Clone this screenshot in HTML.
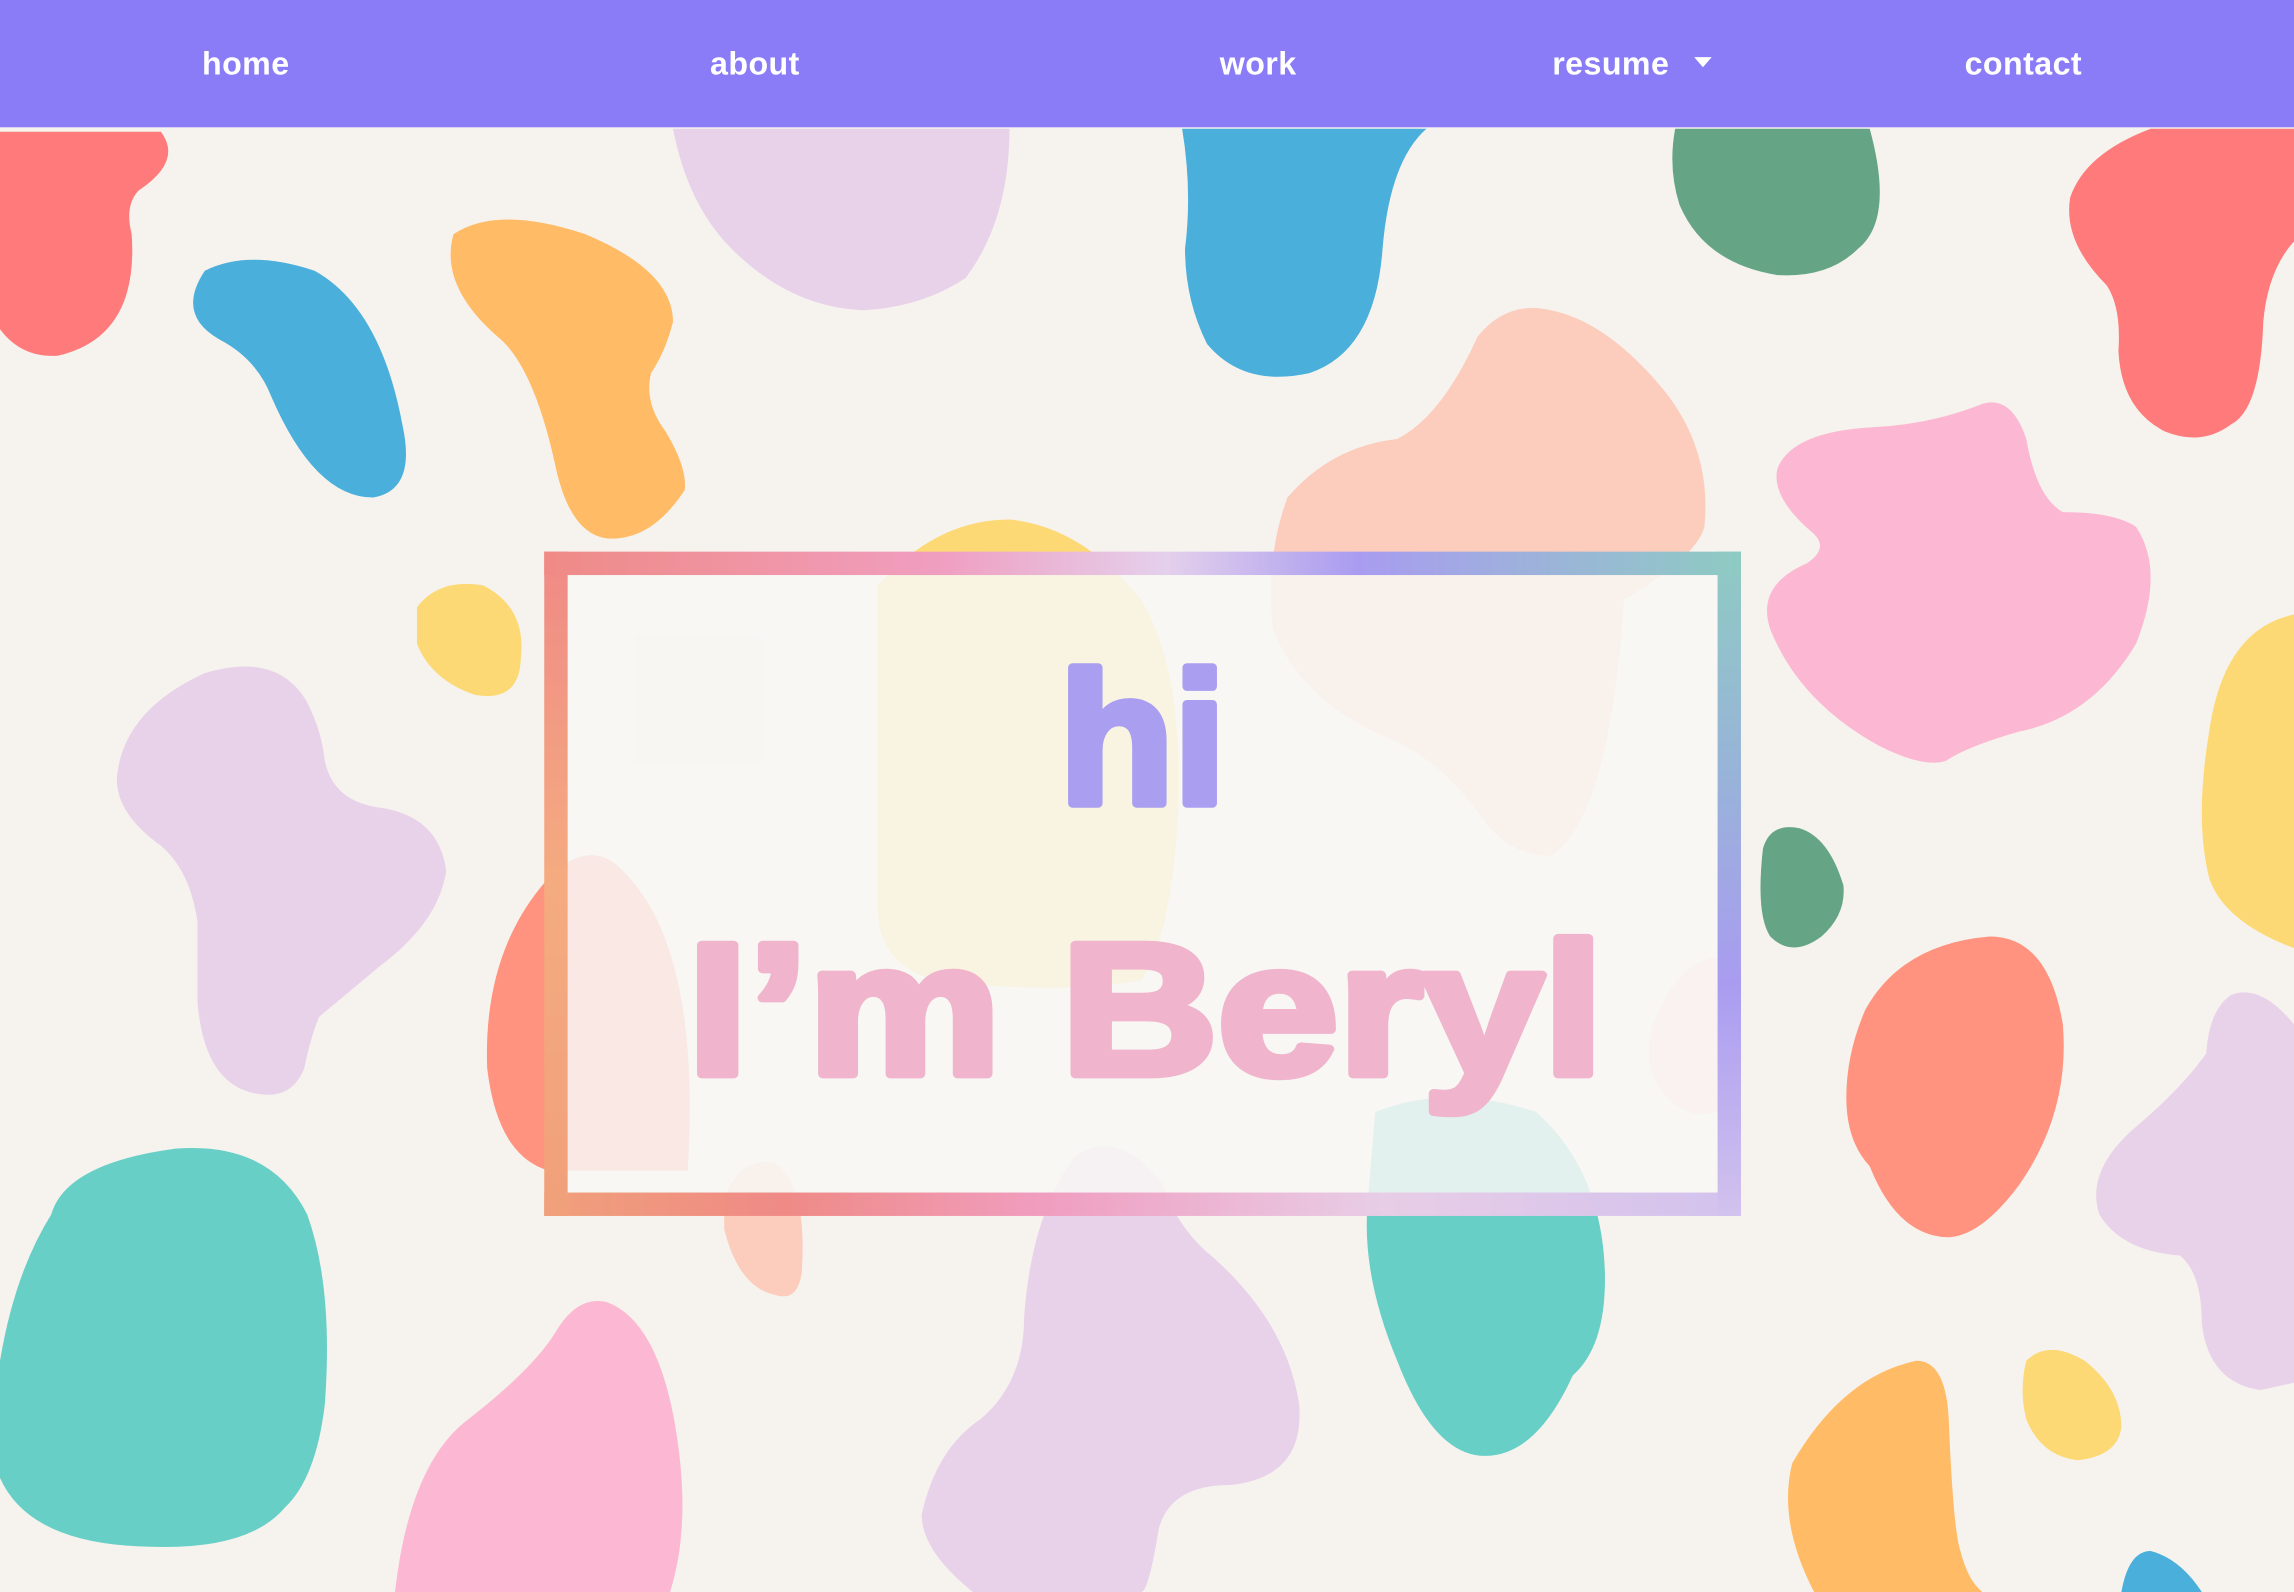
<!DOCTYPE html>
<html><head><meta charset="utf-8"><style>
html,body{margin:0;padding:0;width:2294px;height:1592px;overflow:hidden;background:#f6f3ee;}
svg{display:block}
</style></head><body>
<svg width="2294" height="1592" viewBox="0 0 1568 1088" preserveAspectRatio="none" xmlns="http://www.w3.org/2000/svg">
<defs>
<linearGradient id="gt" x1="0" y1="0" x2="1" y2="0">
<stop offset="0" stop-color="#ef8a86"/>
<stop offset="0.33" stop-color="#f09ec0"/>
<stop offset="0.52" stop-color="#e4d0ec"/>
<stop offset="0.68" stop-color="#a99cf0"/>
<stop offset="1" stop-color="#8ecbc2"/>
</linearGradient>
<linearGradient id="gb" x1="0" y1="0" x2="1" y2="0">
<stop offset="0" stop-color="#f0a07a"/>
<stop offset="0.2" stop-color="#ef8a86"/>
<stop offset="0.42" stop-color="#f09ec0"/>
<stop offset="0.7" stop-color="#e8cde6"/>
<stop offset="1" stop-color="#d2c2ee"/>
</linearGradient>
<linearGradient id="gl" x1="0" y1="0" x2="0" y2="1">
<stop offset="0" stop-color="#ef8a86"/>
<stop offset="0.5" stop-color="#f5ab80"/>
<stop offset="1" stop-color="#f0a07a"/>
</linearGradient>
<linearGradient id="gr" x1="0" y1="0" x2="0" y2="1">
<stop offset="0" stop-color="#8ecbc2"/>
<stop offset="0.35" stop-color="#99b2da"/>
<stop offset="0.65" stop-color="#a99cf0"/>
<stop offset="1" stop-color="#d2c2ee"/>
</linearGradient>
</defs>
<rect width="1568" height="1088" fill="#f6f3ee"/>
<g>
<path fill="#ff7b7b" d="M0,90 L110,90 Q125,110 95,130 Q85,140 90,160 Q95,230 40,243 Q15,245 0,225 Z"/>
<path fill="#4aafdb" d="M140,185 Q170,170 215,185 Q260,210 275,290 Q285,335 255,340 Q215,340 185,270 Q175,245 150,232 Q120,215 140,185 Z"/>
<path fill="#ffbb66" d="M310,160 Q340,140 400,160 Q460,185 460,220 Q455,240 445,255 Q440,275 455,295 Q470,320 468,335 Q445,370 415,368 Q390,365 380,320 Q365,250 340,230 Q300,195 310,160 Z"/>
<path fill="#e8d2ea" d="M460,88 L690,88 Q690,150 660,190 Q630,210 590,212 Q540,210 500,170 Q470,140 460,88 Z"/>
<path fill="#4aafdb" d="M808,88 L975,88 Q950,110 945,170 Q940,240 895,255 Q850,265 825,235 Q810,205 810,170 Q815,130 808,88 Z"/>
<path fill="#65a586" d="M1145,88 L1278,88 Q1295,150 1270,170 Q1250,190 1215,188 Q1165,180 1148,140 Q1140,115 1145,88 Z"/>
<path fill="#ff7b7b" d="M1470,88 L1568,88 L1568,165 Q1550,185 1547,220 Q1545,280 1525,290 Q1505,305 1480,295 Q1450,280 1448,240 Q1450,210 1440,195 Q1410,165 1415,135 Q1425,105 1470,88 Z"/>
<path fill="#fcccbd" d="M880,340 Q910,305 955,300 Q985,285 1010,230 Q1030,205 1060,212 Q1100,220 1140,270 Q1170,310 1165,360 Q1160,380 1110,410 Q1100,560 1060,585 Q1030,585 1010,555 Q985,520 950,505 Q890,480 870,430 Q865,380 880,340 Z"/>
<path fill="#fcb8d2" d="M1215,320 Q1225,295 1280,292 Q1320,290 1355,276 Q1375,270 1385,300 Q1392,340 1410,350 Q1445,350 1460,360 Q1480,390 1460,440 Q1430,490 1380,500 Q1345,510 1330,520 Q1315,525 1285,510 Q1230,480 1210,430 Q1200,400 1235,385 Q1250,375 1240,365 Q1210,340 1215,320 Z"/>
<path fill="#fcd975" d="M1568,420 Q1520,430 1510,500 Q1500,560 1510,600 Q1520,630 1568,648 Z"/>
<path fill="#fcd975" d="M285,415 Q300,395 330,400 Q360,415 356,450 Q355,480 325,475 Q295,465 285,440 Z"/>
<path fill="#e8d2ea" d="M80,530 Q85,485 140,460 Q190,445 210,480 Q220,500 222,520 Q228,548 260,552 Q300,558 305,595 Q300,630 260,660 Q230,685 218,695 Q212,710 208,730 Q200,750 180,748 Q140,745 135,685 Q135,655 135,630 Q130,595 110,578 Q78,555 80,530 Z"/>
<path fill="#fcd975" d="M600,400 Q640,355 690,355 Q740,360 780,410 Q810,460 805,560 Q800,640 780,670 Q720,680 640,670 Q600,660 600,620 Z"/>
<path fill="#ff937f" d="M375,600 Q330,650 333,730 Q340,790 375,800 L470,800 Q480,640 420,590 Q400,575 375,600 Z"/>
<path fill="#65a586" d="M1205,580 Q1210,562 1230,566 Q1250,572 1260,605 Q1262,625 1245,640 Q1225,655 1210,640 Q1200,625 1205,580 Z"/>
<path fill="#fcd6dc" d="M1130,700 Q1150,650 1180,655 L1190,750 Q1165,770 1145,755 Q1120,735 1130,700 Z"/>
<path fill="#ff937f" d="M1275,690 Q1300,645 1360,640 Q1400,640 1410,700 Q1415,760 1380,810 Q1350,850 1325,845 Q1295,840 1278,797 Q1262,780 1262,750 Q1262,720 1275,690 Z"/>
<path fill="#e8d2ea" d="M1568,700 Q1545,672 1525,680 Q1510,690 1508,720 Q1490,745 1460,770 Q1425,800 1435,830 Q1450,855 1490,858 Q1505,870 1505,905 Q1510,945 1545,950 L1568,945 Z"/>
<path fill="#68cfc7" d="M35,830 Q45,795 120,785 Q185,780 210,830 Q228,880 222,960 Q216,1010 195,1030 Q170,1060 100,1057 Q20,1055 0,1010 L0,930 Q10,870 35,830 Z"/>
<path fill="#fcccbd" d="M495,820 Q505,790 530,795 Q552,810 548,870 Q545,890 530,885 Q505,880 495,840 Z"/>
<path fill="#fcb8d2" d="M270,1088 Q280,1000 320,970 Q365,935 380,910 Q395,885 415,890 Q455,905 465,1000 Q470,1050 458,1088 Z"/>
<path fill="#e8d2ea" d="M630,1035 Q640,990 670,970 Q700,945 700,900 Q705,830 735,790 Q765,770 795,810 Q805,840 830,860 Q880,905 888,960 Q892,1010 840,1015 Q800,1015 792,1045 Q785,1088 780,1088 L665,1088 Q630,1060 630,1035 Z"/>
<path fill="#68cfc7" d="M940,760 Q990,740 1050,760 Q1095,800 1097,870 Q1098,920 1075,940 Q1050,995 1015,995 Q980,995 955,930 Q930,870 935,820 Z"/>
<path fill="#ffbb66" d="M1225,1000 Q1260,940 1310,930 Q1330,930 1332,970 Q1335,1045 1340,1060 Q1345,1080 1355,1088 L1240,1088 Q1215,1040 1225,1000 Z"/>
<path fill="#fcd975" d="M1385,930 Q1400,915 1425,930 Q1450,950 1450,975 Q1448,995 1420,998 Q1395,995 1385,970 Q1380,950 1385,930 Z"/>
<path fill="#4aafdb" d="M1450,1088 Q1455,1060 1470,1060 Q1490,1065 1505,1088 Z"/>
</g>
<rect x="380" y="385" width="802" height="438" fill="#f8f7f4" fill-opacity="0.85"/>
<rect x="372" y="815" width="818" height="16" fill="url(#gb)"/>
<rect x="372" y="377" width="16" height="454" fill="url(#gl)"/>
<rect x="1174" y="377" width="16" height="454" fill="url(#gr)"/>
<rect x="372" y="377" width="818" height="16" fill="url(#gt)"/>
<g font-family="Liberation Sans, sans-serif" font-weight="bold" font-size="128" text-anchor="middle" stroke-linejoin="round" paint-order="stroke">
<text x="781" y="549" fill="#a99ef0" stroke="#a99ef0" stroke-width="6">hi</text>
<text x="783" y="734" fill="#f0b4cc" stroke="#f0b4cc" stroke-width="6" textLength="626" lengthAdjust="spacingAndGlyphs">I’m Beryl</text>
</g>
<rect x="0" y="0" width="1568" height="87" fill="#8a7cf7"/>
<g font-family="Liberation Sans, sans-serif" font-weight="bold" font-size="22" fill="#fff" text-anchor="middle" letter-spacing="0.3">
<text x="168" y="51">home</text>
<text x="516" y="51">about</text>
<text x="860" y="51">work</text>
<text x="1101" y="51">resume</text>
<text x="1383" y="51">contact</text>
</g>
<path d="M1158,39 L1170,39 L1164,46 Z" fill="#fff"/>
</svg>
</body></html>
